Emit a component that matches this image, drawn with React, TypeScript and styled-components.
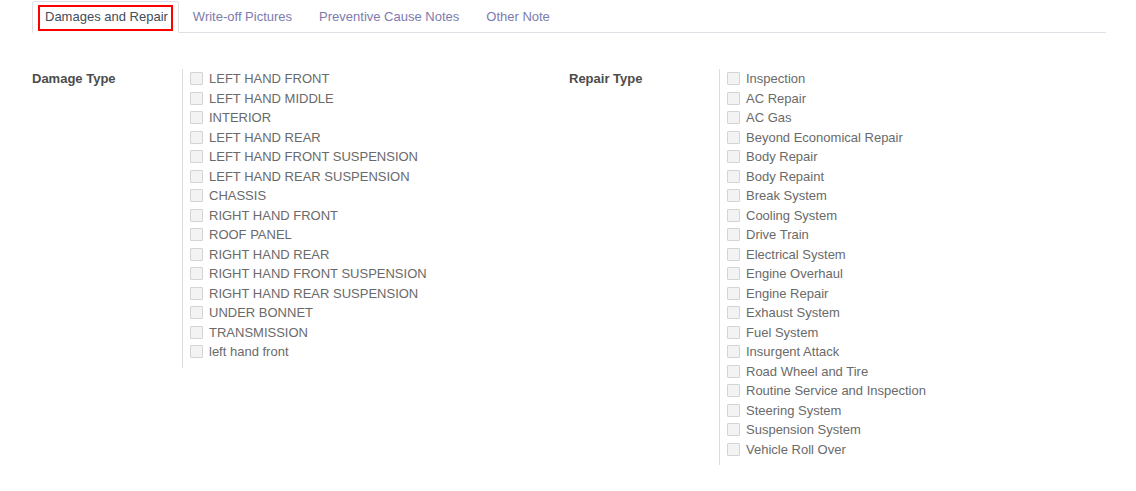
import React from "react";
import styled, { createGlobalStyle } from "styled-components";

const Global = createGlobalStyle`
  html, body { margin: 0; padding: 0; background: #ffffff; }
  body { font-family: "Liberation Sans", Arial, sans-serif; font-size: 13px; color: #666666; }
`;

const Page = styled.div`
  padding: 0 30px 0 32px;
`;

const TabBar = styled.ul`
  display: flex;
  list-style: none;
  margin: 0;
  padding: 0;
  border-bottom: 1px solid #dee2e6;
  height: 32px;
`;

const Tab = styled.li<{ $active?: boolean }>`
  display: flex;
  align-items: ${(p) => (p.$active ? "flex-start" : "center")};
  margin-top: 1px;
  margin-bottom: -1px;
  height: 32px;
  box-sizing: border-box;
  border: 1px solid ${(p) => (p.$active ? "#dee2e6" : "transparent")};
  border-bottom-color: ${(p) => (p.$active ? "#ffffff" : "transparent")};
  border-radius: 3px 3px 0 0;
  background: ${(p) => (p.$active ? "#ffffff" : "transparent")};
  padding: ${(p) => (p.$active ? "0 5px 0 5px" : "0 12px 2px 13px")};
  color: ${(p) => (p.$active ? "#444b5a" : "#7c7bad")};
  white-space: nowrap;
`;

const FocusBox = styled.span`
  display: inline-flex;
  align-items: center;
  height: 26px;
  box-sizing: border-box;
  border: 2px solid #ff0000;
  padding: 0 3px 3px 5px;
  margin-top: 3px;
`;

const Groups = styled.div`
  display: grid;
  grid-template-columns: 1fr 1fr;
  margin-top: 36px;
`;

const Group = styled.div`
  display: grid;
  grid-template-columns: 150px 1fr;
  align-items: start;
`;

const Label = styled.div`
  font-weight: bold;
  color: #4c4c4c;
  line-height: 19.5px;
`;

const Field = styled.div`
  border-left: 1px solid #dcdcdc;
  padding: 0 0 6px 7px;
`;

const Row = styled.label`
  display: flex;
  align-items: center;
  height: 19.5px;
  line-height: 19.5px;
  color: #6a6a6a;
`;

const Box = styled.span`
  width: 13px;
  height: 13px;
  box-sizing: border-box;
  border: 1px solid #d4d4d4;
  background: #f3f3f3;
  border-radius: 1px;
  margin-right: 6px;
  flex: none;
`;

const damage = [
  "LEFT HAND FRONT",
  "LEFT HAND MIDDLE",
  "INTERIOR",
  "LEFT HAND REAR",
  "LEFT HAND FRONT SUSPENSION",
  "LEFT HAND REAR SUSPENSION",
  "CHASSIS",
  "RIGHT HAND FRONT",
  "ROOF PANEL",
  "RIGHT HAND REAR",
  "RIGHT HAND FRONT SUSPENSION",
  "RIGHT HAND REAR SUSPENSION",
  "UNDER BONNET",
  "TRANSMISSION",
  "left hand front",
];

const repair = [
  "Inspection",
  "AC Repair",
  "AC Gas",
  "Beyond Economical Repair",
  "Body Repair",
  "Body Repaint",
  "Break System",
  "Cooling System",
  "Drive Train",
  "Electrical System",
  "Engine Overhaul",
  "Engine Repair",
  "Exhaust System",
  "Fuel System",
  "Insurgent Attack",
  "Road Wheel and Tire",
  "Routine Service and Inspection",
  "Steering System",
  "Suspension System",
  "Vehicle Roll Over",
];

function CheckGroup({ label, items }: { label: string; items: string[] }) {
  return (
    <Group>
      <Label>{label}</Label>
      <Field>
        {items.map((t) => (
          <Row key={t}>
            <Box />
            {t}
          </Row>
        ))}
      </Field>
    </Group>
  );
}

export default function App() {
  return (
    <Page>
      <Global />
      <TabBar>
        <Tab $active>
          <FocusBox>Damages and Repair</FocusBox>
        </Tab>
        <Tab>Write-off Pictures</Tab>
        <Tab>Preventive Cause Notes</Tab>
        <Tab>Other Note</Tab>
      </TabBar>
      <Groups>
        <CheckGroup label="Damage Type" items={damage} />
        <CheckGroup label="Repair Type" items={repair} />
      </Groups>
    </Page>
  );
}
